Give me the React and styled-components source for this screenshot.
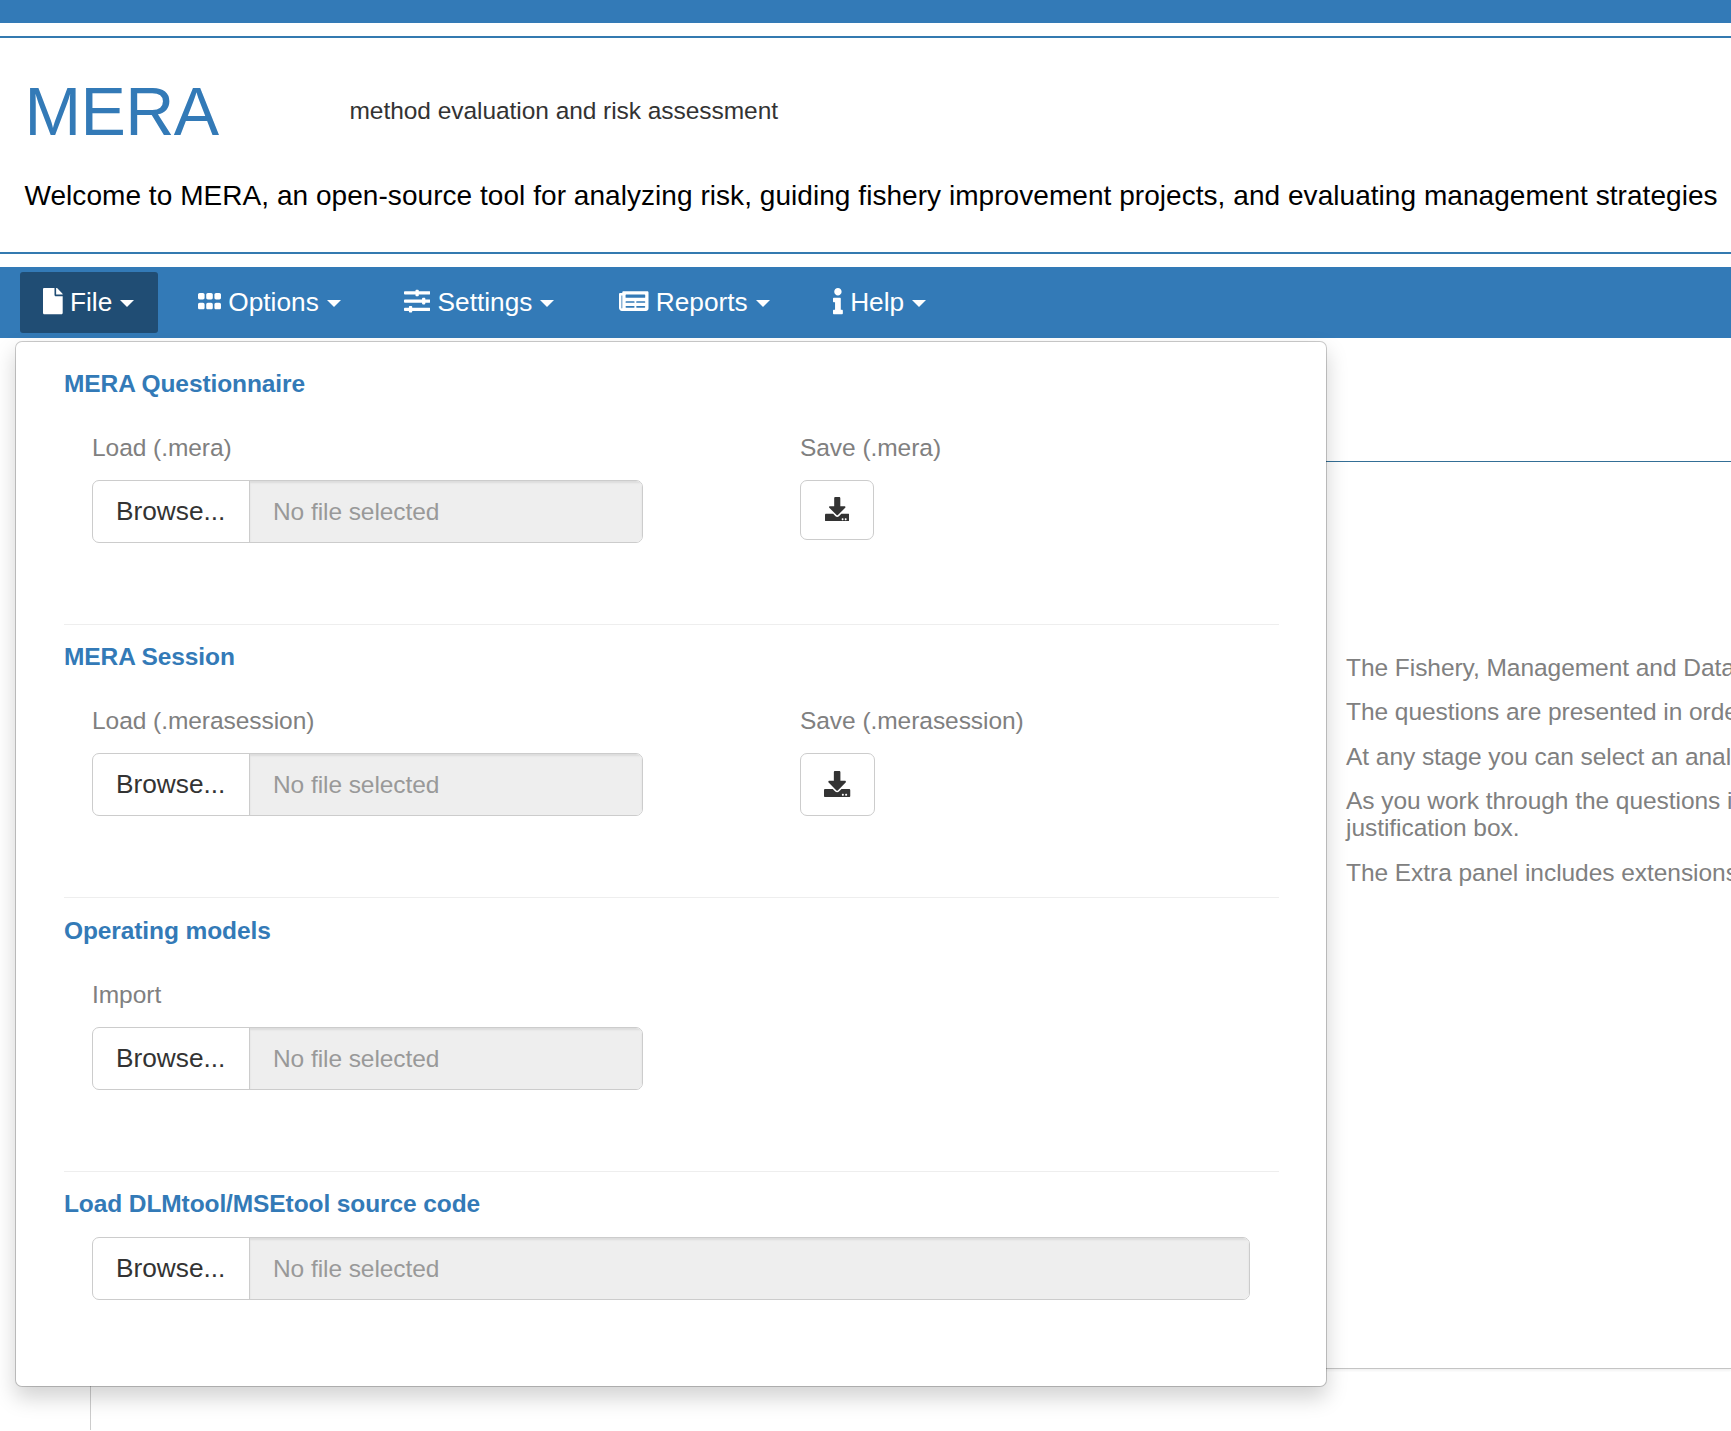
import React from "react";
import styled, { createGlobalStyle } from "styled-components";
import { FaFile, FaGripHorizontal, FaSlidersH, FaNewspaper, FaInfo, FaDownload } from "react-icons/fa";

const Global = createGlobalStyle`
  * { box-sizing: border-box; }
  body {
    margin: 0;
    background: #fff;
    overflow: hidden;
    font-family: "Liberation Sans", Arial, sans-serif;
    font-size: 24.5px;
    color: #333;
  }
  h1, h3, h5, p { margin: 0; font-weight: 400; }
`;

const Page = styled.div`
  height: 1431px;
  overflow: hidden;
`;

const TopBar = styled.div`
  height: 23px;
  margin-bottom: 13px;
  background: #337ab7;
`;

const Header = styled.header`
  height: 218px;
  margin-bottom: 13px;
  padding: 35px 0 0 24.5px;
  border-top: 2px solid #347ab0;
  border-bottom: 2px solid #347ab0;
`;

const Brand = styled.div`
  display: flex;
  align-items: flex-start;
  height: 105px;
`;

const Title = styled.h1`
  width: 325px;
  line-height: 77px;
  font-size: 68px;
  letter-spacing: -0.6px;
  color: #337ab7;
`;

const Tagline = styled.span`
  padding-top: 24px;
  line-height: 28px;
  letter-spacing: -0.05px;
  white-space: nowrap;
`;

const Welcome = styled.h3`
  font-size: 28px;
  line-height: 36px;
  letter-spacing: 0.05px;
  color: #000;
  white-space: nowrap;
`;

const Nav = styled.nav`
  position: relative;
  display: flex;
  align-items: flex-start;
  height: 71px;
  padding: 5px 0 0 20px;
  background: #337ab7;
`;

const NavItem = styled.button`
  display: flex;
  align-items: center;
  flex: none;
  width: ${(p) => p.$width}px;
  height: 61px;
  margin-right: 17px;
  padding: 0 0 1px 23px;
  border: 0;
  border-radius: 3px;
  background: ${(p) => (p.$active ? "#204d74" : "transparent")};
  color: #fff;
  font: 26.25px "Liberation Sans", Arial, sans-serif;
  white-space: nowrap;

  svg {
    flex: none;
    margin: 0 7.3px 1px 0;
    width: ${(p) => p.$icon}px;
    height: 26.25px;
  }
`;

const Caret = styled.span`
  margin: 3px 0 0 8px;
  border-top: 7px solid #fff;
  border-left: 7px solid transparent;
  border-right: 7px solid transparent;
`;

const Menu = styled.section`
  position: absolute;
  z-index: 2;
  top: 74px;
  left: 15px;
  width: 1312px;
  height: 1046px;
  padding: 28px 47px 0 48px;
  border: 1px solid rgba(0, 0, 0, 0.2);
  border-radius: 7px;
  background: #fff;
  background-clip: padding-box;
  box-shadow: 0 10.5px 21px rgba(0, 0, 0, 0.175);
`;

const Group = styled.div`
  height: ${(p) => p.$height}px;
  margin-bottom: 18.4px;
  border-bottom: ${(p) => (p.$last ? "0" : "1px solid #eee")};
`;

const GroupTitle = styled.h5`
  height: 27px;
  line-height: 27px;
  font-size: 24.5px;
  font-weight: 700;
  letter-spacing: -0.1px;
  color: #337ab7;
`;

const Columns = styled.div`
  display: flex;
  margin: ${(p) => p.$top}px 29px 0 28px;
`;

const Column = styled.div`
  flex: none;
  width: ${(p) => p.$width};
`;

const Label = styled.h5`
  height: 27px;
  margin-bottom: 19px;
  line-height: 27px;
  font-size: 24.5px;
  letter-spacing: -0.05px;
  color: #808080;
`;

const FileField = styled.div`
  display: flex;
  width: ${(p) => p.$width};
  height: 63px;
  border: 1px solid #ccc;
  border-radius: 7px;
  overflow: hidden;
`;

const Browse = styled.span`
  flex: none;
  width: 157px;
  padding-left: 23px;
  line-height: 61px;
  font-size: 26.25px;
  color: #333;
  border-right: 1px solid #ccc;
`;

const FileName = styled.span`
  flex: 1;
  padding-left: 23px;
  line-height: 61px;
  letter-spacing: -0.07px;
  color: #999;
  background: #eee;
  box-shadow: inset 0 2px 2px rgba(0, 0, 0, 0.075);
`;

const SaveButton = styled.button`
  display: flex;
  align-items: center;
  justify-content: center;
  width: ${(p) => (p.$large ? 75 : 74)}px;
  height: ${(p) => (p.$large ? 63 : 60)}px;
  padding: 0 0 2px;
  border: 1px solid #ccc;
  border-radius: 7px;
  background: #fff;
  color: #333;

  svg {
    width: ${(p) => (p.$large ? 26.25 : 24.5)}px;
    height: ${(p) => (p.$large ? 26.25 : 24.5)}px;
  }
`;

const Content = styled.main`
  padding-top: 123px;
  margin-left: 90px;
`;

const Rule = styled.div`
  height: 1px;
  background: #346f96;
`;

const Notes = styled.div`
  height: 907px;
  padding: 193px 0 0 1256px;
  border-bottom: 1px solid #c4c4c4;
  box-shadow: 0 2px 2px rgba(0, 0, 0, 0.05);
  white-space: nowrap;
  letter-spacing: -0.05px;
  color: #808080;
`;

const Note = styled.p`
  line-height: 26.95px;
  margin-bottom: 17.5px;
`;

const Lower = styled.div`
  height: 61px;
  border-left: 1px solid #ccc;
`;

function FileInput({ width = "100%" }) {
  return (
    <FileField $width={width}>
      <Browse>Browse...</Browse>
      <FileName>No file selected</FileName>
    </FileField>
  );
}

function TransferGroup({ title, load, save, large }) {
  return (
    <Group $height={255}>
      <GroupTitle>{title}</GroupTitle>
      <Columns $top={37}>
        <Column $width="708px">
          <Label>{load}</Label>
          <FileInput width="551px" />
        </Column>
        {save && (
          <Column $width="300px">
            <Label>{save}</Label>
            <SaveButton $large={large} aria-label={save}><FaDownload /></SaveButton>
          </Column>
        )}
      </Columns>
    </Group>
  );
}

const items = [
  { name: "File", Icon: FaFile, icon: 19.7, width: 138, active: true },
  { name: "Options", Icon: FaGripHorizontal, icon: 23, width: 189 },
  { name: "Settings", Icon: FaSlidersH, icon: 26.25, width: 198 },
  { name: "Reports", Icon: FaNewspaper, icon: 29.5, width: 197 },
  { name: "Help", Icon: FaInfo, icon: 9.85, width: 140 },
];

export default function App() {
  return (
    <Page>
      <Global />
      <TopBar />
      <Header>
        <Brand>
          <Title>MERA</Title>
          <Tagline>method evaluation and risk assessment</Tagline>
        </Brand>
        <Welcome>
          Welcome to MERA, an open-source tool for analyzing risk, guiding fishery improvement projects, and evaluating management strategies
        </Welcome>
      </Header>
      <Nav>
        {items.map(({ name, Icon, icon, width, active }) => (
          <NavItem key={name} $width={width} $icon={icon} $active={active}>
            <Icon />
            {name}
            <Caret />
          </NavItem>
        ))}
        <Menu>
          <TransferGroup title="MERA Questionnaire" load="Load (.mera)" save="Save (.mera)" />
          <TransferGroup title="MERA Session" load="Load (.merasession)" save="Save (.merasession)" large />
          <TransferGroup title="Operating models" load="Import" />
          <Group $height={120} $last>
            <GroupTitle>Load DLMtool/MSEtool source code</GroupTitle>
            <Columns $top={19.5}>
              <FileInput />
            </Columns>
          </Group>
        </Menu>
      </Nav>
      <Content>
        <Rule />
        <Notes>
          <Note>The Fishery, Management and Data</Note>
          <Note>The questions are presented in orde</Note>
          <Note>At any stage you can select an anal</Note>
          <Note>As you work through the questions i<br />justification box.</Note>
          <Note>The Extra panel includes extensions</Note>
        </Notes>
        <Lower />
      </Content>
    </Page>
  );
}
